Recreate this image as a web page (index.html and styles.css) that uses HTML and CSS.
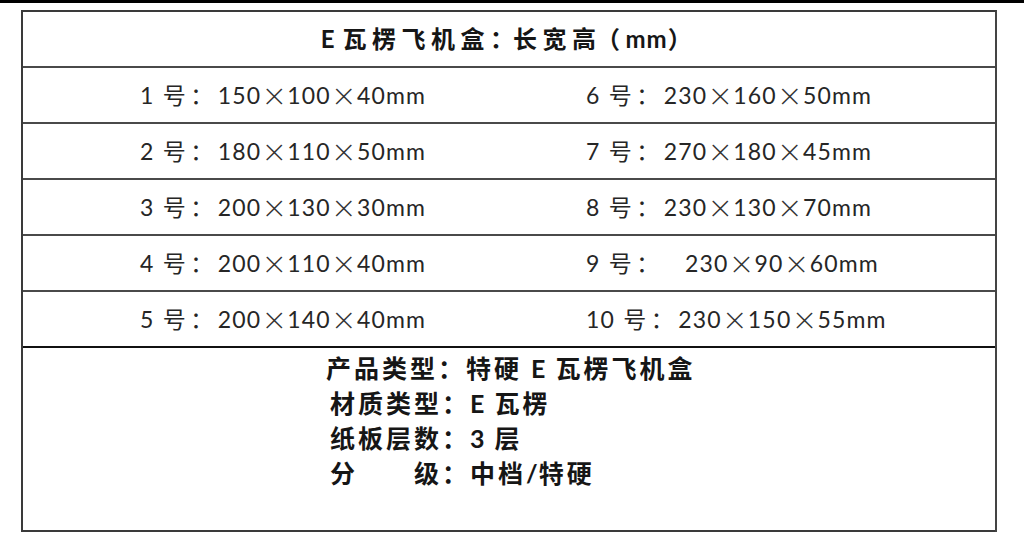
FILE: index.html
```html
<!DOCTYPE html>
<html lang="zh-CN">
<head>
<meta charset="utf-8">
<title>E 瓦楞飞机盒</title>
<link rel="stylesheet" href="styles.css">
</head>
<body>
<div class="topbar"></div>
<div class="sheet">
  <div class="head"><span class="lat">E </span>瓦楞飞机盒<span class="colon">：</span>长宽<span class="tight">高</span>（<span class="lat">mm</span>）</div>
  <div class="row">
    <div class="cell left">1 <span class="cj">号：</span>150<span class="x">×</span>100<span class="x">×</span>40mm</div>
    <div class="cell right">6 <span class="cj">号：</span>230<span class="x">×</span>160<span class="x">×</span>50mm</div>
  </div>
  <div class="row">
    <div class="cell left">2 <span class="cj">号：</span>180<span class="x">×</span>110<span class="x">×</span>50mm</div>
    <div class="cell right">7 <span class="cj">号：</span>270<span class="x">×</span>180<span class="x">×</span>45mm</div>
  </div>
  <div class="row">
    <div class="cell left">3 <span class="cj">号：</span>200<span class="x">×</span>130<span class="x">×</span>30mm</div>
    <div class="cell right">8 <span class="cj">号：</span>230<span class="x">×</span>130<span class="x">×</span>70mm</div>
  </div>
  <div class="row">
    <div class="cell left">4 <span class="cj">号：</span>200<span class="x">×</span>110<span class="x">×</span>40mm</div>
    <div class="cell right">9 <span class="cj">号：</span>&nbsp;&nbsp;&nbsp;230<span class="x">×</span>90<span class="x">×</span>60mm</div>
  </div>
  <div class="row last">
    <div class="cell left">5 <span class="cj">号：</span>200<span class="x">×</span>140<span class="x">×</span>40mm</div>
    <div class="cell right">10 <span class="cj">号：</span>230<span class="x">×</span>150<span class="x">×</span>55mm</div>
  </div>
  <div class="info">
    <p class="line">产品类型：特硬 <span class="lat">E</span> 瓦楞飞机盒</p>
    <p class="line ind">材质类型：<span class="lat">E</span> 瓦楞</p>
    <p class="line ind">纸板层数：<span class="lat">3</span> 层</p>
    <p class="line ind">分　　级：中档<span class="lat">/</span>特硬</p>
  </div>
</div>
</body>
</html>
```
FILE: styles.css
```css
html, body {
  margin: 0;
  padding: 0;
  background: #ffffff;
}

body {
  width: 1024px;
  height: 551px;
  overflow: hidden;
  font-family: Lato, "Noto Sans CJK SC", sans-serif;
  color: #2b2b2b;
}

.topbar {
  height: 3px;
  background: #000000;
}

.sheet {
  margin: 7px 0 0 21px;
  width: 972px;
  border-top: 2px solid #3a3a3a;
  border-left: 2px solid #3a3a3a;
  border-right: 2px solid #444444;
}

.head {
  height: 54px;
  line-height: 54px;
  border-bottom: 2px solid #4a4a4a;
  text-align: center;
  white-space: pre;
  font-size: 24px;
  font-weight: 700;
  letter-spacing: 5.5px;
  color: #161616;
  padding-left: 0;
}

.head .lat {
  letter-spacing: 1px;
}

.head .colon {
  letter-spacing: -1px;
}

.head .tight {
  letter-spacing: 0;
}

.row {
  height: 54px;
  border-bottom: 2px solid #4a4a4a;
  display: grid;
  grid-template-columns: 1fr 1fr;
}

.row.last {
  border-bottom: 2px solid #111111;
}

.cell {
  line-height: 54px;
  font-size: 23px;
  letter-spacing: 1.2px;
  white-space: pre;
  color: #262626;
}

.cell.left {
  padding-left: 117px;
}

.cell.right {
  padding-left: 77px;
}

.cj {
  letter-spacing: 4.5px;
  margin-left: 1px;
}

.x {
  display: inline-block;
  width: 26px;
  text-align: center;
  font-size: 38px;
  font-weight: 300;
  line-height: 1;
  letter-spacing: 0;
  vertical-align: -5px;
  color: #333333;
}

.info {
  height: 184px;
  border-bottom: 2px solid #3a3a3a;
  padding: 3px 0 0 303px;
  box-sizing: border-box;
  font-size: 25px;
  font-weight: 700;
  letter-spacing: 3px;
  color: #161616;
}

.info .lat {
  letter-spacing: 1px;
}

.line {
  margin: 0;
  height: 35px;
  line-height: 35px;
  white-space: pre;
}

.line.ind {
  padding-left: 4px;
}
```
